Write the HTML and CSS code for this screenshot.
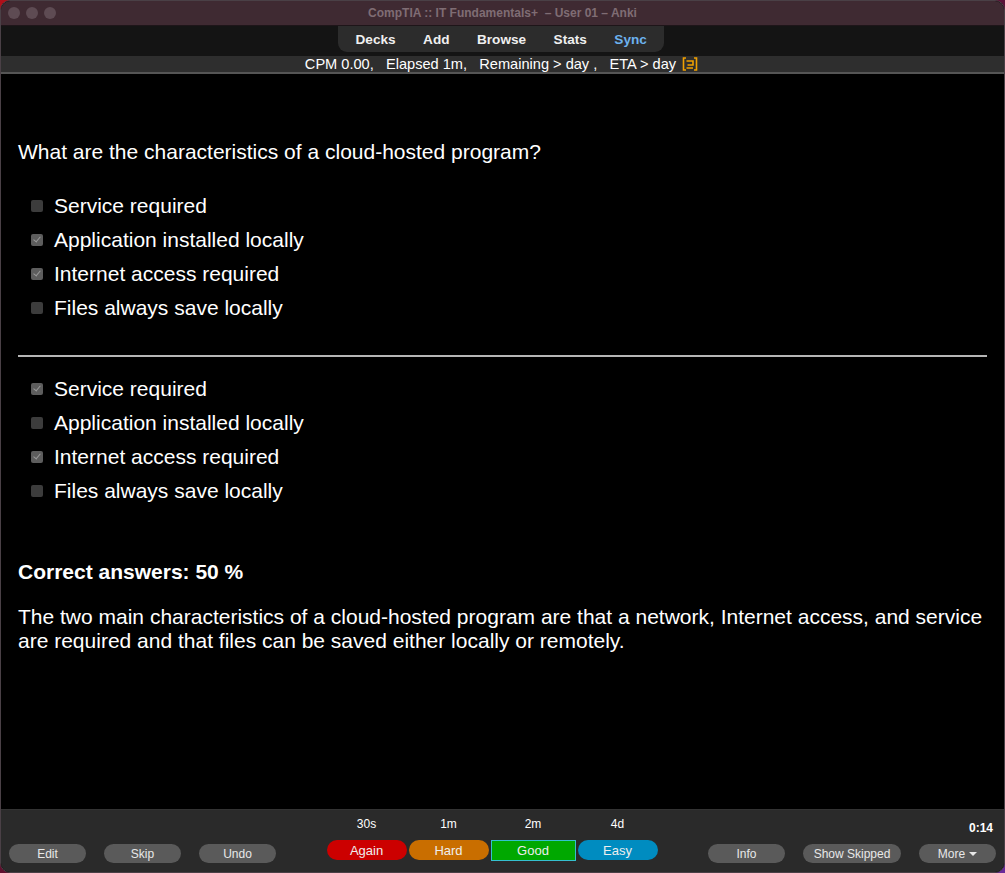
FILE: index.html
```html
<!DOCTYPE html>
<html>
<head>
<meta charset="utf-8">
<link rel="stylesheet" href="styles.css">
</head>
<body>
<div class="window">
  <div class="titlebar">
    <div class="lights"><span class="light"></span><span class="light"></span><span class="light"></span></div>
    <div class="title">CompTIA :: IT Fundamentals+&nbsp; – User 01 – Anki</div>
  </div>
  <div class="toolbar">
    <nav class="tabs">
      <span class="tab">Decks</span>
      <span class="tab">Add</span>
      <span class="tab">Browse</span>
      <span class="tab">Stats</span>
      <span class="tab sync">Sync</span>
    </nav>
  </div>
  <div class="status">
    <span class="status-text">CPM 0.00,   Elapsed 1m,   Remaining &gt; day ,   ETA &gt; day </span>
    <svg class="status-icon" width="16" height="14" viewBox="0 0 16 14" fill="none" stroke="#f0a000" stroke-width="1.6">
      <path d="M4 1 H1.5 V13 H4"/>
      <path d="M12 1 H14.5 V13 H12"/>
      <path d="M4.5 4 H11 V8 H5.5"/>
      <path d="M4.5 11 H11"/>
    </svg>
  </div>
  <main class="content">
    <p class="question">What are the characteristics of a cloud-hosted program?</p>
    <ul class="options">
      <li><span class="cb"></span>Service required</li>
      <li><span class="cb checked"></span>Application installed locally</li>
      <li><span class="cb checked"></span>Internet access required</li>
      <li><span class="cb"></span>Files always save locally</li>
    </ul>
    <hr class="divider">
    <ul class="options second">
      <li><span class="cb checked"></span>Service required</li>
      <li><span class="cb"></span>Application installed locally</li>
      <li><span class="cb checked"></span>Internet access required</li>
      <li><span class="cb"></span>Files always save locally</li>
    </ul>
    <p class="score">Correct answers: 50 %</p>
    <p class="explain">The two main characteristics of a cloud-hosted program are that a network, Internet access, and service are required and that files can be saved either locally or remotely.</p>
  </main>
  <footer class="reviewbar">
    <div class="side left">
      <div class="btnrow">
        <span class="pill">Edit</span>
        <span class="pill">Skip</span>
        <span class="pill">Undo</span>
      </div>
    </div>
    <div class="middle">
      <div class="answer"><span class="ivl">30s</span><span class="ans again">Again</span></div>
      <div class="answer"><span class="ivl">1m</span><span class="ans hard">Hard</span></div>
      <div class="answer"><span class="ivl">2m</span><span class="ans good">Good</span></div>
      <div class="answer"><span class="ivl">4d</span><span class="ans easy">Easy</span></div>
    </div>
    <div class="side right">
      <span class="timer">0:14</span>
      <div class="btnrow">
        <span class="pill">Info</span>
        <span class="pill wide">Show Skipped</span>
        <span class="pill">More <span class="caret"></span></span>
      </div>
    </div>
  </footer>
</div>
</body>
</html>
```

FILE: styles.css
```css
* { box-sizing: border-box; }
html, body {
  margin: 0;
  padding: 0;
  width: 1005px;
  height: 873px;
  overflow: hidden;
  background: linear-gradient(135deg, #b0101a 0%, #5a1030 50%, #6a2a9a 100%);
  font-family: "Liberation Sans", Arial, sans-serif;
}
.window {
  width: 1005px;
  height: 873px;
  display: flex;
  flex-direction: column;
  background: #000;
  border-radius: 10px;
  overflow: hidden;
  border: 1px solid #4a4046;
}
.titlebar {
  height: 25px;
  flex: none;
  background: #3f2a32;
  border-bottom: 1px solid #1e1519;
  display: flex;
  align-items: center;
  justify-content: center;
  position: relative;
}
.lights {
  position: absolute;
  left: 7px;
  top: 6px;
  display: flex;
  gap: 6px;
}
.light {
  width: 12px;
  height: 12px;
  border-radius: 50%;
  background: #5e4b53;
}
.title {
  color: #7f6d74;
  font-size: 12px;
  font-weight: bold;
  white-space: pre;
}
.toolbar {
  height: 30px;
  flex: none;
  background: #141414;
  display: flex;
  justify-content: center;
}
.tabs {
  margin-left: -4px;
  height: 26px;
  background: #2c2c2c;
  border-radius: 0 0 9px 9px;
  display: flex;
  align-items: center;
  gap: 27.5px;
  padding: 0 0 0 18px;
  width: 326px;
}
.tab {
  color: #f0f0f0;
  font-size: 13.6px;
  font-weight: bold;
}
.tab.sync { color: #6db2ee; }
.status {
  height: 18px;
  flex: none;
  background: #2e2e2e;
  border-bottom: 2px solid #555;
  display: flex;
  align-items: center;
  justify-content: center;
  padding-right: 2px;
}
.status-text {
  color: #fff;
  font-size: 14.6px;
  white-space: pre;
}
.status-icon { margin-left: 2px; }
.content {
  flex: 1;
  background: #000;
  color: #fff;
  padding: 66px 17px 0;
  font-size: 21px;
}
.question {
  margin: 0;
  line-height: 24px;
  font-size: 21px;
}
.options {
  list-style: none;
  margin: 25px 0 0;
  padding: 0 0 0 13px;
}
.options li {
  height: 34px;
  display: flex;
  align-items: center;
  font-size: 21px;
}
.cb {
  width: 12px;
  height: 12px;
  border-radius: 2px;
  background: #3c3c3c;
  margin-right: 11px;
  flex: none;
  position: relative;
}
.cb.checked { background: #5d5d5d; }
.cb.checked::after {
  content: "";
  position: absolute;
  left: 4px;
  top: 1px;
  width: 3px;
  height: 6px;
  border: solid #9a9a9a;
  border-width: 0 1.5px 1.5px 0;
  transform: rotate(40deg);
}
.divider {
  margin: 30px 0 0;
  border: 0;
  height: 2px;
  background: #b5b5b5;
}
.options.second { margin-top: 15px; }
.score {
  margin: 52px 0 0;
  line-height: 24px;
  font-weight: bold;
  font-size: 21px;
}
.explain {
  margin: 21px 0 0;
  line-height: 24px;
  font-size: 21px;
}
.reviewbar {
  height: 63px;
  flex: none;
  background: #2a2a2a;
  border-top: 1px solid #333;
  display: flex;
  align-items: flex-end;
  padding: 0 8px 9px;
}
.side {
  display: flex;
  flex-direction: column;
  align-items: flex-end;
}
.side.left { width: 267px; }
.side.right { width: 288px; }
.btnrow {
  display: flex;
  gap: 18px;
}
.pill {
  width: 77px;
  height: 19px;
  border-radius: 10px;
  background: #5a5a5a;
  color: #e8e8e8;
  font-size: 12px;
  display: flex;
  align-items: center;
  justify-content: center;
}
.pill.wide { width: 98px; }
.caret {
  display: inline-block;
  margin-left: 4px;
  border-left: 4px solid transparent;
  border-right: 4px solid transparent;
  border-top: 4px solid #e8e8e8;
}
.timer {
  color: #fff;
  font-size: 12px;
  font-weight: bold;
  margin: 0 3px 9px 0;
}
.middle {
  flex: 1;
  display: flex;
  justify-content: center;
  gap: 2px;
  margin-bottom: 2px;
}
.answer {
  display: flex;
  flex-direction: column;
  align-items: center;
}
.ivl {
  color: #fff;
  font-size: 12px;
  margin-bottom: 9px;
}
.ans {
  width: 80px;
  height: 20px;
  border-radius: 10px;
  color: #eee;
  font-size: 13px;
  display: flex;
  align-items: center;
  justify-content: center;
}
.ans.again { background: #cc0000; }
.ans.hard { background: #c96e00; }
.ans.good {
  background: #00a800;
  border: 1px solid #35c0d0;
  border-radius: 0;
  width: 85px;
  height: 21px;
}
.ans.easy { background: #008cc0; }
```
